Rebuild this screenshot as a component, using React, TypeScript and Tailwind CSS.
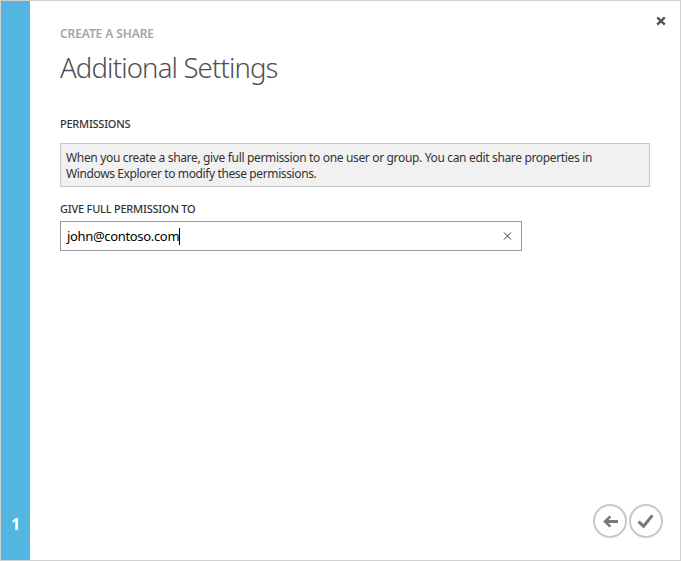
import React from "react";

function CloseIcon() {
  return (
    <svg width="10" height="10" viewBox="0 0 10 10" fill="none" stroke="#555" strokeWidth="2.4">
      <path d="M1.2 1.4 8.8 8.6M8.8 1.4 1.2 8.6" />
    </svg>
  );
}

function ClearIcon() {
  return (
    <svg width="9" height="8" viewBox="0 0 9 8" fill="none" stroke="#333" strokeWidth="1">
      <path d="M1 0.5 8 7.5M8 0.5 1 7.5" />
    </svg>
  );
}

function BackIcon() {
  return (
    <svg width="34" height="34" viewBox="0 0 34 34" fill="none">
      <circle cx="17" cy="17" r="16" stroke="#c8c8c8" strokeWidth="2" />
      <path d="M25 17.5H12.5" stroke="#777" strokeWidth="3" />
      <path d="M17.4 12.4 12 17.5 17.4 22.6" stroke="#777" strokeWidth="2.6" />
    </svg>
  );
}

function CheckIcon() {
  return (
    <svg width="34" height="34" viewBox="0 0 34 34" fill="none">
      <circle cx="17" cy="17" r="16" stroke="#c8c8c8" strokeWidth="2" />
      <path d="M9.6 17.6 14.6 22.2 23.4 11.4" stroke="#777" strokeWidth="3" />
    </svg>
  );
}

export default function App() {
  return (
    <div className="flex h-[561px] w-[681px] border border-[#d0d0d0] bg-white font-['Noto_Sans','Open_Sans',sans-serif] text-[#333]">
      <aside className="flex w-[29px] flex-col justify-end bg-[#52b6e1] pb-[26px] text-center text-[16px] leading-5 font-bold text-white">
        1
      </aside>
      <main className="flex flex-1 flex-col pl-[30px]">
        <header className="flex justify-between pr-[14px]">
          <div className="pt-[25px]">
            <p className="text-[12px] leading-4 font-semibold tracking-[-0.1px] whitespace-nowrap text-[#a5a5a5]">CREATE A SHARE</p>
            <h1 className="mt-[6px] text-[27.5px] leading-10 font-light tracking-[-0.85px] whitespace-nowrap text-[#505050]">Additional Settings</h1>
          </div>
          <button className="mt-[15px] flex h-[10px]" aria-label="Close">
            <CloseIcon />
          </button>
        </header>
        <h2 className="mt-[28px] text-[11px] leading-4 font-medium tracking-[-0.25px] whitespace-nowrap">PERMISSIONS</h2>
        <p className="mt-[11px] h-[44px] w-[590px] border border-[#c6c6c6] bg-[#f1f1f1] pt-[6px] pl-[5px] text-[12px] leading-4 tracking-[-0.34px] whitespace-nowrap">
          When you create a share, give full permission to one user or group. You can edit share properties in
          <br />
          <span className="tracking-[-0.38px]">Windows Explorer to modify these permissions.</span>
        </p>
        <label className="mt-[14px] text-[11px] leading-4 font-medium tracking-[-0.22px] whitespace-nowrap">GIVE FULL PERMISSION TO</label>
        <div className="mt-[4px] flex h-[30px] w-[462px] items-center border border-[#999] pr-[9px] pl-[6px] text-[13px] text-black">
          <span className="w-[112px] pt-[2px] tracking-[-0.33px] whitespace-nowrap">john@contoso.com</span>
          <span className="h-[17px] w-px bg-black" />
          <button className="ml-auto" aria-label="Clear">
            <ClearIcon />
          </button>
        </div>
        <footer className="mt-auto flex justify-end gap-[2px] pr-[17px] pb-[22px]">
          <button aria-label="Back"><BackIcon /></button>
          <button aria-label="Finish"><CheckIcon /></button>
        </footer>
      </main>
    </div>
  );
}
